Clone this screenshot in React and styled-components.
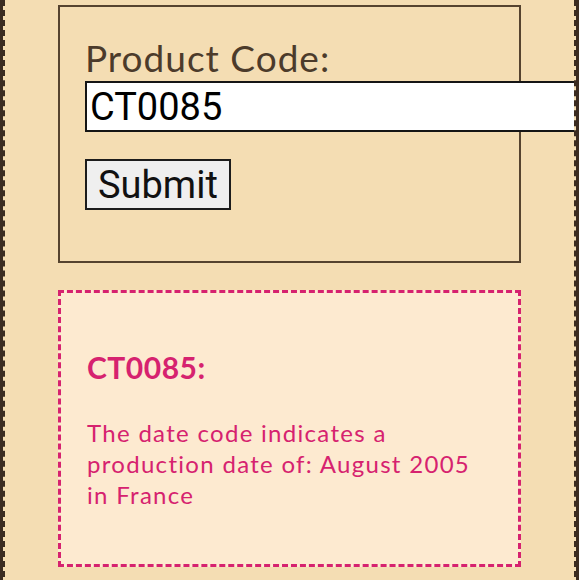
import React from "react";
import styled, { createGlobalStyle } from "styled-components";

const GlobalStyle = createGlobalStyle`
  html, body {
    margin: 0;
    padding: 0;
    background: #3b2c21;
  }
`;

const Page = styled.div`
  margin: 0 3px;
  min-height: 580px;
  background: #f4ddb3;
  border-left: 2px dashed #3b2c21;
  border-right: 2px dashed #3b2c21;
  padding: 5px 0 20px;
  box-sizing: border-box;
  display: flex;
  flex-direction: column;
  align-items: center;
  gap: 27px;
  overflow: hidden;
`;

const FormBox = styled.form`
  width: 463px;
  box-sizing: border-box;
  border: 2px solid #55432f;
  padding: 29px 25px 51px;
  display: flex;
  flex-direction: column;
  align-items: flex-start;
`;

const Label = styled.label`
  font-family: Lato, "Liberation Sans", sans-serif;
  font-size: 37px;
  line-height: 44px;
  letter-spacing: 1px;
  color: #4c3b2b;
  margin-bottom: 1px;
`;

const Input = styled.input`
  width: 520px;
  height: 51px;
  box-sizing: border-box;
  border: 2px solid #151515;
  background: #fff;
  padding: 0 3px;
  font-family: Roboto, "Liberation Sans", sans-serif;
  font-size: 38px;
  color: #000;
  outline: none;
  margin-bottom: 27px;
`;

const Button = styled.button`
  height: 51px;
  box-sizing: border-box;
  border: 2px solid #1c1c1c;
  background: #efefef;
  padding: 0 11px;
  font-family: Roboto, "Liberation Sans", sans-serif;
  font-size: 38px;
  color: #111;
`;

const ResultBox = styled.div`
  width: 463px;
  box-sizing: border-box;
  border: 3px dashed #d6226f;
  background: #fdead0;
  padding: 56px 26px 54px;
  color: #d6226f;
  font-family: Lato, "Liberation Sans", sans-serif;
`;

const Heading = styled.h3`
  margin: 0 0 32px;
  font-size: 30px;
  line-height: 36px;
  font-weight: 700;
  letter-spacing: 0.5px;
`;

const Text = styled.p`
  margin: 0;
  font-size: 24px;
  line-height: 31px;
  letter-spacing: 1.3px;
`;

export default function App() {
  return (
    <>
      <GlobalStyle />
      <Page>
        <FormBox onSubmit={(e) => e.preventDefault()}>
          <Label htmlFor="code">Product Code:</Label>
          <Input id="code" defaultValue="CT0085" />
          <Button type="submit">Submit</Button>
        </FormBox>
        <ResultBox>
          <Heading>CT0085:</Heading>
          <Text>
            The date code indicates a production date of: August 2005 in France
          </Text>
        </ResultBox>
      </Page>
    </>
  );
}
